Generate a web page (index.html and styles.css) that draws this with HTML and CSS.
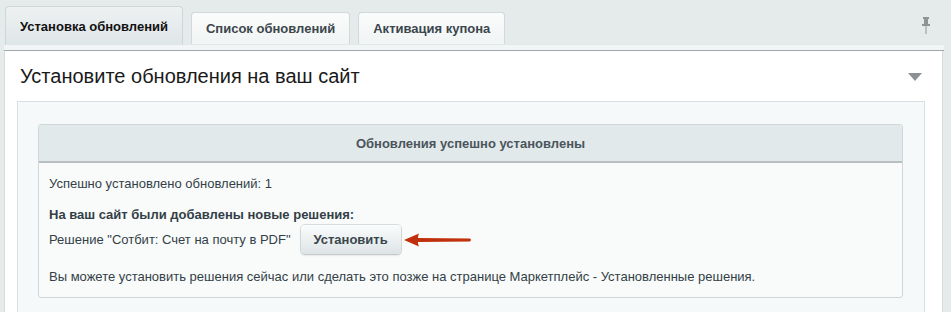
FILE: index.html
```html
<!DOCTYPE html>
<html lang="ru">
<head>
<meta charset="utf-8">
<link rel="stylesheet" href="styles.css">
</head>
<body>
<div class="tabs">
  <div class="tab active">Установка обновлений</div>
  <div class="tab">Список обновлений</div>
  <div class="tab">Активация купона</div>
  <div class="pin">
    <svg width="10" height="17" viewBox="0 0 10 17"><path d="M2 0h6v2H7v5h2v2H1V7h2V2H2z" fill="#8d9597"/><rect x="4.5" y="9" width="1" height="8" fill="#8d9597"/></svg>
  </div>
</div>
<div class="strip"></div>
<div class="panel">
  <div class="title-row">
    <h1 class="title">Установите обновления на ваш сайт</h1>
    <span class="toggle"></span>
  </div>
  <div class="area">
    <div class="box">
      <div class="box-head">Обновления успешно установлены</div>
      <div class="box-body">
        <p class="line">Успешно установлено обновлений: 1</p>
        <p class="line bold gap">На ваш сайт были добавлены новые решения:</p>
        <div class="sol-row">
          <span class="line">Решение "Сотбит: Счет на почту в PDF"</span>
          <button class="btn">Установить</button>
          <svg class="arrow" width="70" height="16" viewBox="0 0 70 16">
            <path d="M1 8 L16 1.5 Q14.5 5 15 6 L67 6.6 Q69 8 67 9.4 L15 10 Q14.5 11 16 14.5 Z" fill="#c1300c"/>
          </svg>
        </div>
        <p class="line gap2">Вы можете установить решения сейчас или сделать это позже на странице Маркетплейс - Установленные решения.</p>
      </div>
    </div>
  </div>
</div>
</body>
</html>
```
FILE: styles.css
```css
html, body {
  margin: 0;
  padding: 0;
}
body {
  background: #e5eaeb;
  font-family: "Liberation Sans", Arial, sans-serif;
  width: 951px;
  height: 312px;
  overflow: hidden;
}
.tabs {
  display: flex;
  align-items: flex-end;
  height: 45px;
  padding-left: 5px;
  box-sizing: border-box;
}
.tab {
  box-sizing: border-box;
  height: 32px;
  margin-left: 8px;
  margin-bottom: 1px;
  padding: 0 14px;
  border: 1px solid #d3d9db;
  border-bottom: none;
  border-radius: 4px 4px 0 0;
  background: linear-gradient(#fbfcfc, #f1f4f4);
  font-size: 13px;
  font-weight: bold;
  color: #3b464c;
  white-space: nowrap;
  display: flex;
  align-items: center;
}
.tab.active {
  margin-left: 0;
  margin-bottom: 0;
  height: 39px;
  padding: 0 14px;
  background: linear-gradient(#eef1f2, #dfe6e8);
  border-color: #cfd6d8;
  color: #111;
}
.pin {
  margin-left: auto;
  margin-right: 20px;
  align-self: flex-start;
  margin-top: 17px;
  line-height: 0;
}
.strip {
  height: 5px;
  margin: -1px 7px 0 4px;
  background: #f1f5f5;
  border-top: 1px solid #e2e8e9;
  border-bottom: 1px solid #9fa7a9;
}
.panel {
  margin: 0 8px 0 4px;
  background: #fff;
  border-left: 1px solid #d6dcdd;
  border-right: 1px solid #d6dcdd;
  height: 262px;
}
.title-row {
  display: flex;
  justify-content: space-between;
  align-items: center;
  height: 50px;
  padding: 0 20px 0 15px;
}
.title {
  margin: 0;
  font-size: 20px;
  font-weight: normal;
  color: #1a1a1a;
  line-height: 24px;
}
.toggle {
  width: 0;
  height: 0;
  border-left: 7.5px solid transparent;
  border-right: 7.5px solid transparent;
  border-top: 8px solid #8c9294;
  margin-top: 2px;
}
.area {
  margin: 0 17px 0 12px;
  background: #f5f9f9;
  border: 1px solid #d8e0e2;
  border-bottom: none;
  padding: 22px 21px 0 20px;
  height: 189px;
}
.box {
  background: #f9fbfb;
  border: 1px solid #d0d7d8;
  border-radius: 3px;
}
.box-head {
  height: 36px;
  line-height: 37px;
  text-align: center;
  background: #e2e9eb;
  border-bottom: 2px solid #b7bfc1;
  font-size: 13px;
  font-weight: bold;
  color: #4a555b;
  border-radius: 3px 3px 0 0;
}
.box-body {
  padding: 13px 10px 12px 10px;
}
.line {
  margin: 0;
  font-size: 13px;
  line-height: 16px;
  color: #333f46;
}
.bold {
  font-weight: bold;
}
.gap {
  margin-top: 15px;
}
.gap2 {
  margin-top: 15px;
}
.sol-row {
  display: flex;
  align-items: center;
  margin-top: 2px;
}
.btn {
  margin-left: 10px;
  width: 100px;
  height: 29px;
  border: none;
  border-radius: 4px;
  background: linear-gradient(#fbfcfc, #dde4e6);
  box-shadow: 0 0 0 1px rgba(180,190,193,0.45), 0 1px 2px rgba(0,0,0,0.22);
  font-family: "Liberation Sans", Arial, sans-serif;
  font-size: 13px;
  font-weight: bold;
  color: #3b464c;
  padding: 0;
}
.arrow {
  margin-left: 2px;
}
```
